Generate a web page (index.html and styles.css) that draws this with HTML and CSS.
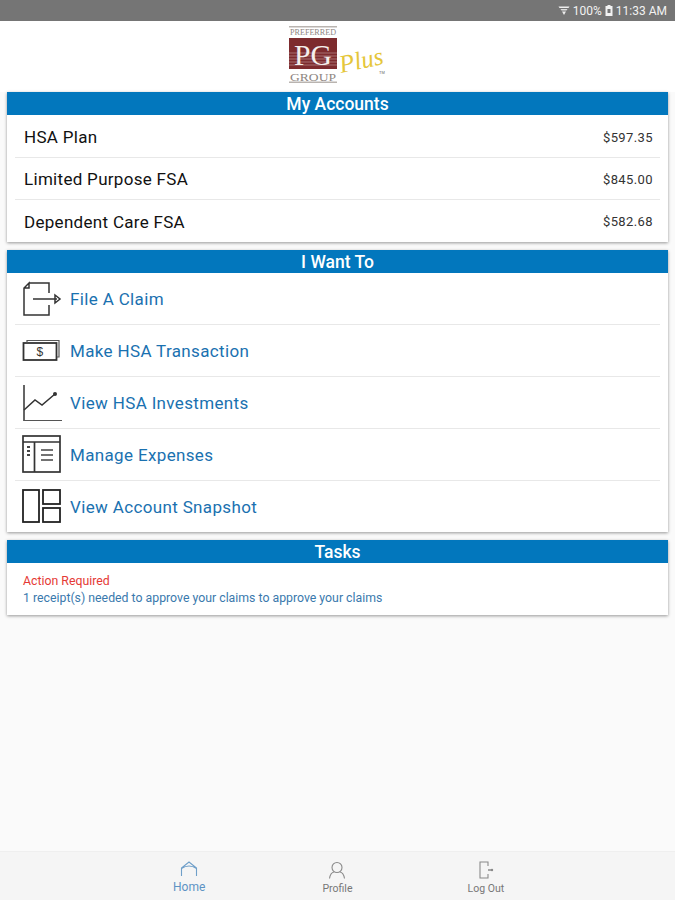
FILE: index.html
```html
<!DOCTYPE html>
<html lang="en">
<head>
    <meta charset="UTF-8">
    <meta name="viewport" content="width=device-width, initial-scale=1.0">
    <title>Home</title>
    <link rel="stylesheet" href="styles.css">
</head>
<body>
    <div class="statusbar">
        <svg class="wifi" width="12" height="11" viewBox="0 0 12 11">
            <path d="M0.5 1.500h11l-1 1.500h-9z" fill="#eee"/>
            <path d="M2.500 4h7l-1 1.500h-5z" fill="#ddd"/>
            <path d="M4 6.500h4L6 10z" fill="#eee"/>
        </svg>
        <span>100%</span>
        <svg class="battery" width="8" height="11" viewBox="0 0 8 11">
            <path d="M2.500 0h3v1H7.500v10H.5V1h2z" fill="#f2f2f2"/>
            <rect x="2.500" y="4" width="3" height="4" fill="#757575"/>
        </svg>
        <span>11:33 AM</span>
    </div>

    <div class="logo-bar">
        <svg class="logo" width="100" height="58" viewBox="0 0 100 58">
            <rect x="0" y="0" width="48" height="1.500" fill="#b9b4b0"/>
            <text x="24" y="9" class="logo-small" textLength="46" lengthAdjust="spacingAndGlyphs">PREFERRED</text>
            <rect x="0" y="12" width="48" height="31" fill="#7d2b2e"/>
            <path d="M0 27h48M0 30h48M0 33h48M0 36h48M0 39h48" stroke="#a87071" stroke-width="1"/>
            <text x="24" y="38.500" class="logo-pg" textLength="38" lengthAdjust="spacingAndGlyphs">PG</text>
            <text x="24" y="54.500" class="logo-group" textLength="46" lengthAdjust="spacingAndGlyphs">GROUP</text>
            <rect x="0" y="55.500" width="48" height="1.500" fill="#b9b4b0"/>
            <text x="52" y="47" class="logo-plus" transform="rotate(-12 52 47)">Plus</text>
            <text x="90" y="48" class="logo-tm">TM</text>
        </svg>
    </div>

    <main class="content">
        <section class="card accounts">
            <h2 class="card-title">My Accounts</h2>
            <div class="account-row"><span class="account-name">HSA Plan</span><span class="account-amount">$597.35</span></div>
            <div class="account-row"><span class="account-name">Limited Purpose FSA</span><span class="account-amount">$845.00</span></div>
            <div class="account-row"><span class="account-name">Dependent Care FSA</span><span class="account-amount">$582.68</span></div>
        </section>

        <section class="card">
            <h2 class="card-title">I Want To</h2>
            <a class="action-row">
                <svg class="action-icon" width="40" height="36" viewBox="0 0 40 36">
                    <path d="M7 2h20v10M27 24v10H2V7l5-5v5H2M11 18h24M33 14l5 4-5 4z" fill="none" stroke="#333" stroke-width="1.500"/>
                </svg>
                <span>File A Claim</span>
            </a>
            <a class="action-row">
                <svg class="action-icon" width="40" height="36" viewBox="0 0 40 36">
                    <rect x="1.500" y="10" width="33" height="17" fill="none" stroke="#333" stroke-width="1.800"/>
                    <path d="M5 10V7.500h32V24h-2" fill="none" stroke="#555" stroke-width="1.200"/>
                    <text x="18" y="23" class="icon-dollar">$</text>
                </svg>
                <span>Make HSA Transaction</span>
            </a>
            <a class="action-row">
                <svg class="action-icon" width="40" height="36" viewBox="0 0 40 36">
                    <path d="M2 0v36h38" fill="none" stroke="#555" stroke-width="1.800"/>
                    <path d="M2 25l11-10 7 5 13-11" fill="none" stroke="#333" stroke-width="1.500"/>
                    <circle cx="33" cy="9" r="2" fill="#333"/>
                </svg>
                <span>View HSA Investments</span>
            </a>
            <a class="action-row">
                <svg class="action-icon icon-up" width="40" height="38" viewBox="0 0 40 38">
                    <rect x="1" y="1" width="37" height="36" fill="none" stroke="#333" stroke-width="1.700"/>
                    <path d="M1 7h37M12.500 7v30" fill="none" stroke="#333" stroke-width="1.700"/>
                    <path d="M5 12h3M5 16h3M5 20h3" stroke="#444" stroke-width="1.800"/>
                    <path d="M19 15h12M19 20h12M19 25h12" stroke="#444" stroke-width="1.500"/>
                </svg>
                <span>Manage Expenses</span>
            </a>
            <a class="action-row">
                <svg class="action-icon icon-up" width="40" height="34" viewBox="0 0 40 34">
                    <rect x="1" y="1" width="16" height="32" fill="none" stroke="#222" stroke-width="1.800"/>
                    <rect x="21" y="1" width="17" height="14" fill="none" stroke="#222" stroke-width="1.800"/>
                    <rect x="21" y="19" width="17" height="14" fill="none" stroke="#222" stroke-width="1.800"/>
                </svg>
                <span>View Account Snapshot</span>
            </a>
        </section>

        <section class="card">
            <h2 class="card-title">Tasks</h2>
            <div class="task">
                <p class="task-required">Action Required</p>
                <p class="task-text">1 receipt(s) needed to approve your claims to approve your claims</p>
            </div>
        </section>
    </main>

    <nav class="tabbar">
        <a class="tab tab-active">
            <svg width="18" height="16" viewBox="0 0 18 16">
                <path d="M1.500 15V7L9 1l7.500 6v8M1.500 7.500Q9 2.500 16.500 7.500" fill="none" stroke="#6f9fc9" stroke-width="1.100"/>
            </svg>
            <span>Home</span>
        </a>
        <a class="tab">
            <svg width="18" height="18" viewBox="0 0 18 18">
                <circle cx="9" cy="6.500" r="5" fill="none" stroke="#8a8a8a" stroke-width="1.100"/>
                <path d="M1.500 17.500Q2.500 11.500 6 11M16.500 17.500Q15.500 11.500 12 11" fill="none" stroke="#8a8a8a" stroke-width="1.100"/>
            </svg>
            <span>Profile</span>
        </a>
        <a class="tab">
            <svg width="18" height="18" viewBox="0 0 18 18">
                <path d="M11 5V1H3v16h8v-4" fill="none" stroke="#8a8a8a" stroke-width="1.100"/>
                <path d="M11 9h4" stroke="#8a8a8a" stroke-width="1.500"/>
                <circle cx="15" cy="9" r="1.200" fill="#8a8a8a"/>
            </svg>
            <span>Log Out</span>
        </a>
    </nav>
</body>
</html>
```

FILE: styles.css
```css
* {
    box-sizing: border-box;
}
body {
    font-family: Roboto, "Liberation Sans", sans-serif;
    background-color: #fafafa;
    margin: 0;
    padding: 0;
    display: flex;
    flex-direction: column;
    height: 900px;
    overflow: hidden;
}
.statusbar {
    height: 21px;
    background-color: #757575;
    color: #f2f2f2;
    font-size: 12px;
    display: flex;
    justify-content: flex-end;
    align-items: center;
    gap: 3px;
    padding-right: 8px;
    flex-shrink: 0;
}
.logo-bar {
    height: 71px;
    background-color: #fff;
    padding: 5px 0 0 289px;
    flex-shrink: 0;
}
.logo {
    display: block;
}
.logo-small {
    font-family: "Liberation Serif", serif;
    font-size: 8px;
    fill: #8e8682;
    text-anchor: middle;
}
.logo-pg {
    font-family: "Liberation Serif", serif;
    font-size: 30px;
    fill: #f4efec;
    text-anchor: middle;
}
.logo-group {
    font-family: "Liberation Serif", serif;
    font-size: 10.500px;
    fill: #8e8682;
    text-anchor: middle;
}
.logo-plus {
    font-family: "Liberation Serif", serif;
    font-style: italic;
    font-size: 25px;
    fill: #e5c63a;
}
.logo-tm {
    font-family: "Liberation Sans", sans-serif;
    font-size: 4px;
    fill: #666;
}
.icon-dollar {
    font-family: "Liberation Sans", sans-serif;
    font-size: 12px;
    fill: #333;
    text-anchor: middle;
}
.content {
    flex: 1;
    padding: 0 7px;
    display: flex;
    flex-direction: column;
    gap: 8px;
}
.card {
    background-color: #fff;
    box-shadow: 0 1px 3px rgba(0,0,0,0.4);
}
.card-title {
    margin: 0;
    height: 23px;
    background-color: #0277bd;
    color: #fff;
    font-size: 17.500px;
    font-weight: 500;
    line-height: 25px;
    text-align: center;
}
.accounts .card-title {
    margin-bottom: 1px;
}
.account-row {
    height: 42px;
    margin-left: 8px;
    margin-right: 8px;
    padding: 1px 7px 0 9px;
    display: flex;
    justify-content: space-between;
    align-items: center;
    border-bottom: 1px solid #e8e8e8;
}
.account-row:last-child {
    border-bottom: none;
}
.account-name {
    font-size: 17px;
    letter-spacing: 0.3px;
    color: #111;
}
.account-amount {
    font-size: 13px;
    letter-spacing: 0.4px;
    color: #333;
}
.action-row {
    height: 52px;
    margin: 0 8px;
    padding: 1px 0 0 7px;
    display: flex;
    align-items: center;
    gap: 8px;
    border-bottom: 1px solid #e8e8e8;
    color: #1a71b0;
    font-size: 17px;
    letter-spacing: 0.35px;
}
.action-row:last-child {
    height: 51px;
    border-bottom: none;
}
.action-icon {
    flex-shrink: 0;
}
.icon-up {
    margin-top: -2px;
}
.task {
    height: 52px;
    padding: 10px 16px 0;
    font-size: 12.300px;
    line-height: 17px;
}
.task p {
    margin: 0;
}
.task-required {
    color: #e53935;
}
.task-text {
    color: #3a79ad;
}
.tabbar {
    height: 49px;
    background-color: #f5f5f5;
    border-top: 1px solid #efefef;
    padding: 0 115px;
    display: grid;
    grid-template-columns: repeat(3, 1fr);
    flex-shrink: 0;
}
.tab {
    display: flex;
    flex-direction: column;
    align-items: center;
    padding-top: 9px;
    gap: 3px;
    font-size: 10.500px;
    color: #777;
}
.tab-active {
    color: #5d93c4;
    font-size: 12px;
}
```
